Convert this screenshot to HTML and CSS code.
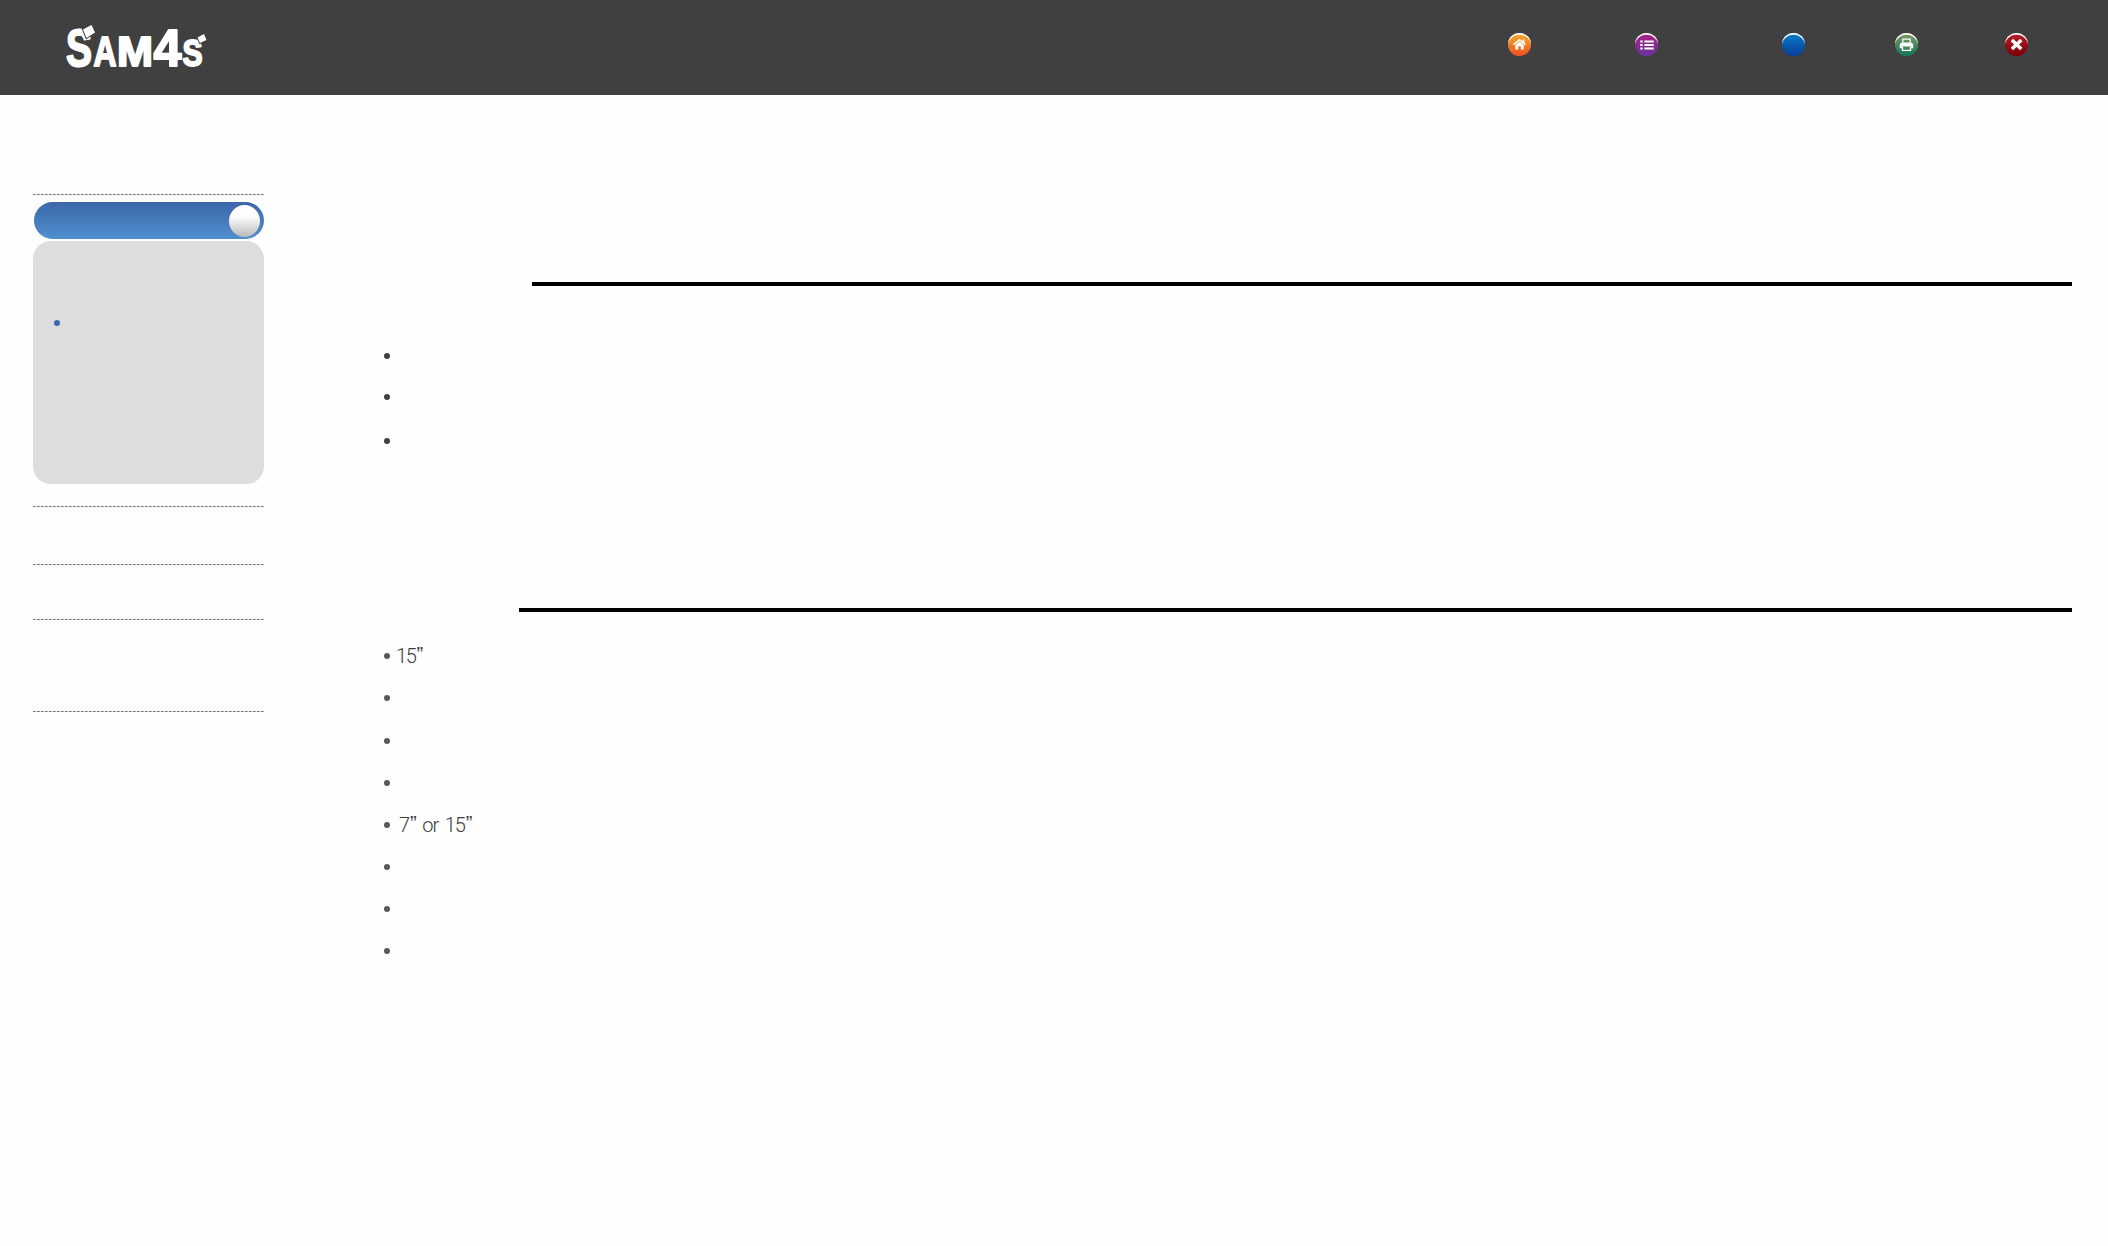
FILE: index.html
```html
<!DOCTYPE html>
<html lang="en">
<head>
    <meta charset="UTF-8">
    <meta name="viewport" content="width=device-width, initial-scale=1.0">
    <title>SAM4S</title>
    <link rel="stylesheet" href="styles.css">
</head>
<body>
    <header class="header">
        <svg class="logo" viewBox="0 0 144 46" role="img" aria-label="SAM4S">
            <text class="logo-big" x="1" y="41" textLength="26" lengthAdjust="spacingAndGlyphs">S</text>
            <text class="logo-mid" x="28.5" y="41" textLength="23" lengthAdjust="spacingAndGlyphs">A</text>
            <text class="logo-mid" x="52" y="41" textLength="36" lengthAdjust="spacingAndGlyphs">M</text>
            <text class="logo-big" x="88.5" y="41" textLength="28" lengthAdjust="spacingAndGlyphs">4</text>
            <text class="logo-small" x="117.5" y="41" textLength="20" lengthAdjust="spacingAndGlyphs">S</text>
            <path class="logo-spark" d="M18 4.500l8.500-4.500 3.500 7.500-8.500 5.500zM132.500 12.500l6.500-3.500 2.500 6-6.500 3z"/>
        </svg>
        <nav class="nav">
            <a class="nav-item nav-home" href="#" aria-label="Home">
                <svg viewBox="0 0 24 24">
                    <path d="M5.800 12.200L12 7l6.200 5.200M16.200 6.800v3" fill="none" stroke="#fff" stroke-width="1.700"/>
                    <path d="M7.700 12.400l4.300-3.500 4.400 3.500V17.300h-3v-3.600h-2.700v3.600h-3z" fill="#fff"/>
                </svg>
            </a>
            <a class="nav-item nav-list" href="#" aria-label="Contents">
                <svg viewBox="0 0 24 24">
                    <path d="M5.500 8.900H8M9.800 8.900h9.700M5.500 12.500H8M9.800 12.500h9.700M5.500 16.100H8M9.800 16.100h9.700" stroke="#fff" stroke-width="2"/>
                </svg>
            </a>
            <a class="nav-item nav-blue" href="#" aria-label="Previous"></a>
            <a class="nav-item nav-print" href="#" aria-label="Print">
                <svg viewBox="0 0 24 24">
                    <path d="M8.200 10.200V6.300h7.600v3.900" fill="none" stroke="#fff" stroke-width="1.300"/>
                    <path d="M7 9.800h10l2 1.700v4.300h-2.200v-1.800H7.200v1.800H5v-4.300z" fill="#fff"/>
                    <path d="M7.800 14.500v3.600h8.400v-3.600" fill="none" stroke="#fff" stroke-width="1.400"/>
                </svg>
            </a>
            <a class="nav-item nav-close" href="#" aria-label="Close">
                <svg viewBox="0 0 24 24">
                    <path d="M7.200 7.400l9.800 9.400M17 7.400l-9.800 9.400" stroke="#fff" stroke-width="3.600"/>
                </svg>
            </a>
        </nav>
    </header>

    <div class="page">
        <aside class="sidebar">
            <div class="dash"></div>
            <div class="menu-title"><span class="knob"></span></div>
            <div class="menu-panel"><span class="dot dot-blue"></span></div>
            <div class="dash dash-gap-1"></div>
            <div class="dash dash-gap-2"></div>
            <div class="dash dash-gap-3"></div>
            <div class="dash dash-gap-4"></div>
        </aside>

        <main class="content">
            <section>
                <div class="rule"></div>
                <ul class="list list-dark">
                    <li><span class="dot"></span></li>
                    <li><span class="dot"></span></li>
                    <li><span class="dot"></span></li>
                </ul>
            </section>
            <section class="section-parts">
                <div class="rule rule-long"></div>
                <ul class="list list-parts">
                    <li><span class="dot"></span><span class="size">15<span class="inch">”</span></span></li>
                    <li><span class="dot"></span></li>
                    <li><span class="dot"></span></li>
                    <li><span class="dot"></span></li>
                    <li><span class="dot"></span><span class="size size-range">7<span class="inch">”</span> or 15<span class="inch">”</span></span></li>
                    <li><span class="dot"></span></li>
                    <li><span class="dot"></span></li>
                    <li><span class="dot"></span></li>
                </ul>
            </section>
        </main>
    </div>
</body>
</html>
```
FILE: styles.css
```css
* {
    box-sizing: border-box;
}

body {
    margin: 0;
    min-height: 100vh;
    background: #fefefe;
    font-family: Roboto, "Liberation Sans", sans-serif;
    color: #3c3c3e;
}

/* header */
.header {
    height: 95px;
    padding: 25px 80px 0 65px;
    background: #404040;
    display: flex;
    justify-content: space-between;
    align-items: flex-start;
}

.logo {
    width: 144px;
    height: 46px;
    overflow: visible;
    fill: #fff;
    stroke: #fff;
    stroke-width: 2;
    stroke-linejoin: round;
    font-family: "Liberation Sans", Arial, sans-serif;
    font-weight: bold;
}

.logo-big {
    font-size: 51px;
}

.logo-mid {
    font-size: 42px;
}

.logo-small {
    font-size: 37px;
}

.logo-spark {
    stroke: #404040;
    stroke-width: 2;
    stroke-linejoin: miter;
    paint-order: stroke;
}

.nav {
    display: flex;
    padding-top: 8px;
}

.nav-item {
    width: 23px;
    height: 23px;
    border-radius: 50%;
    box-shadow: inset 0 2px 0 -0.3px #fff;
}

.nav-item svg {
    display: block;
    width: 23px;
    height: 23px;
}

.nav-home {
    background: linear-gradient(#f6ae2c, #ee4f24);
}

.nav-list {
    margin-left: 104px;
    background: linear-gradient(#b01f83, #6833a0);
}

.nav-blue {
    margin-left: 124px;
    background: linear-gradient(#087dc5, #073f9c);
}

.nav-print {
    margin-left: 90px;
    background: linear-gradient(#819b65, #14765a);
}

.nav-close {
    margin-left: 87px;
    background: linear-gradient(#bd1d2b, #780006);
}

.page {
    display: flex;
    padding: 99px 36px 0 33px;
}

/* sidebar */
.sidebar {
    width: 231px;
    flex: none;
}

.dash {
    height: 1px;
    background: repeating-linear-gradient(90deg, #777 0 2px, #999 2px 3px, #eee 3px 4px);
}

.dash-gap-1 {
    margin-top: 22px;
}

.dash-gap-2 {
    margin-top: 57px;
}

.dash-gap-3 {
    margin-top: 54px;
}

.dash-gap-4 {
    margin-top: 91px;
}

.menu-title {
    height: 37px;
    margin: 7px 0 2px 1px;
    padding: 3px 4px 0 0;
    border-radius: 19px;
    background: linear-gradient(#3c67a8, #5090d0);
    display: flex;
    justify-content: flex-end;
}

.knob {
    width: 31px;
    height: 32px;
    border-radius: 50%;
    background: linear-gradient(#fff 35%, #b9b9bb);
}

.menu-panel {
    height: 243px;
    padding: 78.5px 0 0 20.5px;
    border-radius: 18px;
    background: #dcdddf;
}

.dot {
    display: block;
    flex: none;
    width: 6px;
    height: 6px;
    border-radius: 50%;
    background: #58585a;
}

.dot-blue {
    background: #3c6baa;
}

/* content */
.content {
    flex: 1;
    padding: 88px 0 0 120px;
}

.rule {
    height: 4px;
    margin-left: 148px;
    background: #000;
}

.rule-long {
    margin-left: 135px;
}

.list {
    margin: 0;
    padding: 0;
    list-style: none;
    display: grid;
}

.list li {
    display: flex;
    align-items: center;
}

.list-dark {
    padding-top: 49px;
    grid-template-rows: 41px 42px 45px;
}

.list-dark .dot {
    background: #404042;
}

.section-parts {
    margin-top: 145px;
}

.list-parts {
    padding-top: 23.4px;
    grid-auto-rows: 42.07px;
}

.size {
    margin-left: 6px;
    font-size: 20px;
    font-weight: 300;
    line-height: 24px;
    letter-spacing: -1.4px;
}

.size-range {
    margin-left: 9px;
    letter-spacing: -1.1px;
    word-spacing: 3px;
}

.inch {
    margin-left: 1px;
    font-family: "Liberation Sans", Arial, sans-serif;
    position: relative;
    top: -2px;
}
```
